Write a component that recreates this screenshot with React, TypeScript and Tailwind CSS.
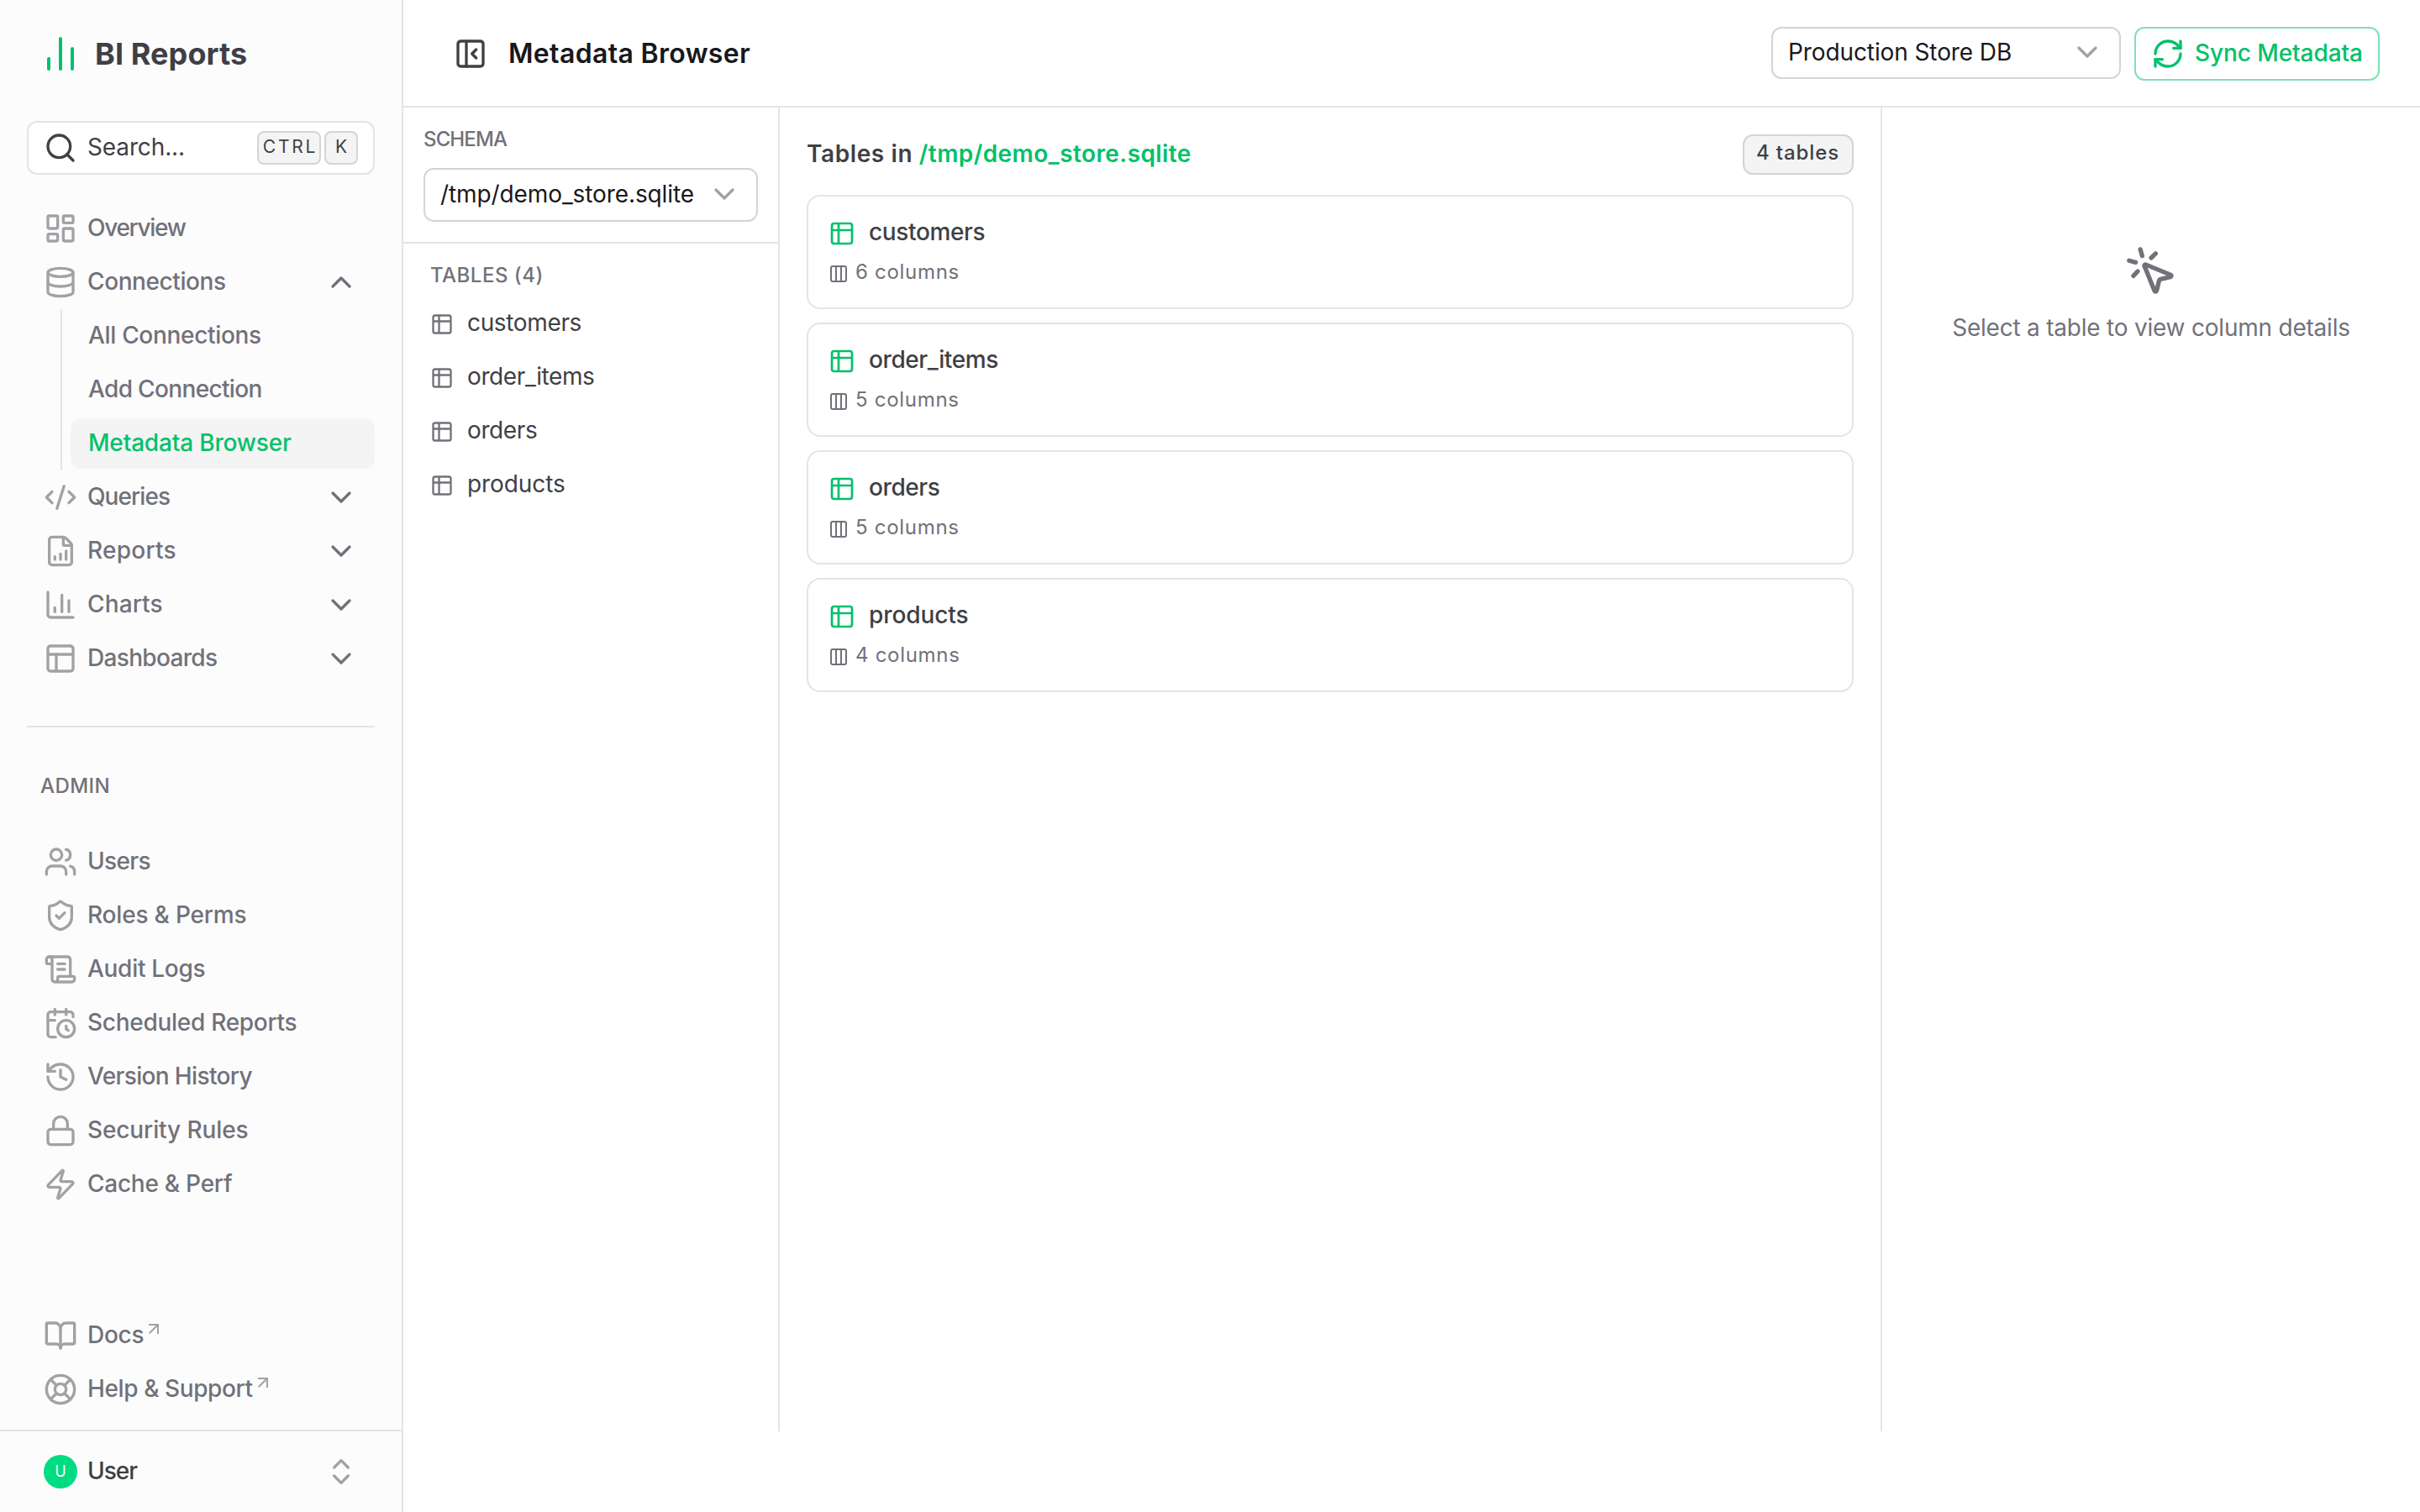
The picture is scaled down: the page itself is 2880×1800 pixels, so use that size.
import React from 'react'
import {
  BookOpen,
  CalendarClock,
  ChartColumn,
  ChartNoAxesColumn,
  ChevronDown,
  ChevronUp,
  ChevronsUpDown,
  CodeXml,
  Columns3,
  Database,
  FileChartColumnIncreasing,
  History,
  LayoutDashboard,
  LifeBuoy,
  Lock,
  MousePointerClick,
  PanelLeftClose,
  PanelsTopLeft,
  RefreshCw,
  ScrollText,
  Search,
  ShieldCheck,
  Users,
  Zap,
  type LucideIcon
} from 'lucide-react'

interface NavItem {
  label: string
  icon: LucideIcon
  tracking: string
  expandable?: boolean
  external?: boolean
}

interface TableInfo {
  name: string
  columns: number
  tracking: string
}

const CONNECTION_LINKS = [
  { label: 'All Connections', tracking: 'tracking-[-0.32px]', active: false },
  { label: 'Add Connection', tracking: 'tracking-[-0.65px]', active: false },
  { label: 'Metadata Browser', tracking: 'tracking-[-0.18px]', active: true }
]

const MAIN_NAV: NavItem[] = [
  { label: 'Queries', icon: CodeXml, tracking: 'tracking-[-0.92px]', expandable: true },
  { label: 'Reports', icon: FileChartColumnIncreasing, tracking: 'tracking-[0.25px]', expandable: true },
  { label: 'Charts', icon: ChartColumn, tracking: 'tracking-[0.13px]', expandable: true },
  { label: 'Dashboards', icon: PanelsTopLeft, tracking: 'tracking-[-0.67px]', expandable: true }
]

const ADMIN_NAV: NavItem[] = [
  { label: 'Users', icon: Users, tracking: 'tracking-[-0.65px]' },
  { label: 'Roles & Perms', icon: ShieldCheck, tracking: 'tracking-[-0.19px]' },
  { label: 'Audit Logs', icon: ScrollText, tracking: 'tracking-[-0.29px]' },
  { label: 'Scheduled Reports', icon: CalendarClock, tracking: 'tracking-[-0.28px]' },
  { label: 'Version History', icon: History, tracking: 'tracking-[-0.64px]' },
  { label: 'Security Rules', icon: Lock, tracking: 'tracking-[-0.11px]' },
  { label: 'Cache & Perf', icon: Zap, tracking: 'tracking-[-0.25px]' }
]

const FOOTER_NAV: NavItem[] = [
  { label: 'Docs', icon: BookOpen, tracking: 'tracking-[-0.26px]', external: true },
  { label: 'Help & Support', icon: LifeBuoy, tracking: 'tracking-[-0.4px]', external: true }
]

const TABLES: TableInfo[] = [
  { name: 'customers', columns: 6, tracking: 'tracking-[-0.35px]' },
  { name: 'order_items', columns: 5, tracking: 'tracking-[-0.4px]' },
  { name: 'orders', columns: 5, tracking: 'tracking-[-0.4px]' },
  { name: 'products', columns: 4, tracking: 'tracking-[-0.08px]' }
]

const SCHEMA = '/tmp/demo_store.sqlite'

export default function App() {
  return (
    <div className="flex h-[1800px] w-[2880px] overflow-hidden bg-white font-['Inter','Liberation_Sans',sans-serif] text-[28px] leading-10 text-[#3f3f46]">
      <Sidebar />
      <div className="flex min-w-0 flex-1 flex-col">
        <Header />
        <main className="flex h-[1576px]">
          <SchemaPanel />
          <TableList />
          <ColumnDetails />
        </main>
      </div>
    </div>
  )
}

function Sidebar() {
  return (
    <aside className="flex w-[480px] flex-shrink-0 flex-col border-r-2 border-[#e4e4e4] bg-[#fcfcfc]">
      <div className="flex h-32 items-center gap-[17px] pl-12">
        <ChartNoAxesColumn size={48} className="text-[#00c16a]" />
        <span className="text-[36px] font-bold tracking-[0.1px]">BI Reports</span>
      </div>

      <div className="flex flex-1 flex-col px-8 pt-4">
        {/* Search trigger */}
        <button className="flex h-16 items-center rounded-xl border-2 border-[#e4e4e4] bg-white pl-[18px] pr-[18px]">
          <Search size={40} className="flex-shrink-0" />
          <span className="ml-3 flex-1 pb-[2px] text-left tracking-[-0.13px]">Search...</span>
          <Kbd className="w-[76px] tracking-[2.8px] pl-[3px]">CTRL</Kbd>
          <Kbd className="ml-1 w-10">K</Kbd>
        </button>

        <nav className="mt-[34px] flex flex-col gap-1">
          <NavRow item={{ label: 'Overview', icon: LayoutDashboard, tracking: 'tracking-[-1.3px]' }} />
          <div>
            <NavRow item={{ label: 'Connections', icon: Database, tracking: 'tracking-[-0.41px]' }} open />
            <div className="my-[2px] ml-10 flex flex-col gap-1 border-l-2 border-[#e4e4e4] py-[2px] pl-[10px]">
              {CONNECTION_LINKS.map(link => (
                <a
                  key={link.label}
                  className={`flex h-[60px] items-center rounded-xl pb-[3px] pl-[21px] font-medium ${link.tracking} ${
                    link.active ? 'bg-[#f4f4f4] text-[#00c16a]' : 'text-[#71717a]'
                  }`}
                >
                  {link.label}
                </a>
              ))}
            </div>
            <div className="flex flex-col gap-1">
              {MAIN_NAV.map(item => <NavRow key={item.label} item={item} />)}
            </div>
          </div>
        </nav>

        <div className="mt-[50px] h-[2px] bg-[#e4e4e4]" />

        <div className="mt-[42px] flex h-[60px] items-center pb-[5px] pl-4 text-2xl font-medium tracking-[0.4px] text-[#71717a]">
          ADMIN
        </div>
        <nav className="mt-7 flex flex-col gap-1">
          {ADMIN_NAV.map(item => <NavRow key={item.label} item={item} />)}
        </nav>

        <nav className="mb-[18px] mt-auto flex flex-col gap-1">
          {FOOTER_NAV.map(item => <NavRow key={item.label} item={item} />)}
        </nav>
      </div>

      {/* Account menu */}
      <div className="flex h-[98px] items-center border-t-2 border-[#e4e4e4] pl-[52px] pr-[52px]">
        <span className="flex h-10 w-10 items-center justify-center rounded-full bg-[#00dc82] text-lg text-white">U</span>
        <span className="ml-3 flex-1 pb-[3px] font-medium tracking-[-1px]">User</span>
        <ChevronsUpDown size={40} className="text-[#a1a1a6]" />
      </div>
    </aside>
  )
}

function NavRow({ item, open }: { item: NavItem; open?: boolean }) {
  const Icon = item.icon
  return (
    <a className="flex h-[60px] items-center pl-5 pr-5 text-[#71717a]">
      <Icon size={40} className="mr-3 flex-shrink-0 text-[#a1a1a6]" />
      <span className={`pb-[3px] font-medium ${item.tracking}`}>{item.label}</span>
      {item.external && (
        <svg width="12" height="12" viewBox="0 0 12 12" fill="none" stroke="currentColor" strokeWidth="2" className="mb-4 ml-1.5 text-[#a1a1a6]">
          <path d="M0 1h11v11M11 1L.7 11.3" />
        </svg>
      )}
      {open && <ChevronUp size={40} className="ml-auto" />}
      {item.expandable && <ChevronDown size={40} className="ml-auto" />}
    </a>
  )
}

function Kbd({ className, children }: { className: string; children: React.ReactNode }) {
  return (
    <kbd className={`flex h-10 items-center justify-center rounded-lg border-2 border-[#d4d4d4] bg-[#f4f4f4] pb-[3px] font-['Inter',sans-serif] text-[21px] ${className}`}>
      {children}
    </kbd>
  )
}

function Header() {
  return (
    <header className="flex h-32 flex-shrink-0 items-start border-b-2 border-[#e4e4e4] pl-[60px] pr-12 pt-8">
      <div className="flex h-16 items-center">
        <PanelLeftClose size={40} />
        <h1 className="ml-[25px] text-[32px] font-semibold tracking-[0.34px] text-[#18181b]">Metadata Browser</h1>
      </div>
      <div className="ml-auto flex gap-4">
        <Select className="h-[62px] w-[416px]">Production Store DB</Select>
        <button className="flex h-16 w-[292px] items-center rounded-xl border-2 border-[#00c16a]/50 pl-[18px] text-[#00c16a]">
          <RefreshCw size={40} />
          <span className="ml-3 pb-[3px] font-medium tracking-[-0.09px]">Sync Metadata</span>
        </button>
      </div>
    </header>
  )
}

function Select({ className, children }: { className: string; children: React.ReactNode }) {
  return (
    <button className={`flex items-center justify-between rounded-xl border-2 border-[#d4d4d4] bg-white pb-[2px] pl-[18px] pr-[18px] text-[#18181b] ${className}`}>
      <span className="whitespace-nowrap tracking-[-0.1px]">{children}</span>
      <ChevronDown size={40} className="flex-shrink-0 text-[#a1a1a6]" />
    </button>
  )
}

function SchemaPanel() {
  return (
    <section className="w-[448px] flex-shrink-0 border-r-2 border-[#e4e4e4]">
      <div className="border-b-2 border-[#e4e4e4] p-6">
        <div className="mb-[21px] h-[27px] pt-px text-2xl leading-[26px] font-medium tracking-[-0.87px] text-[#71717a]">SCHEMA</div>
        <Select className="h-16 w-full">{SCHEMA}</Select>
      </div>
      <div className="px-4 pt-4">
        <div className="flex h-12 items-center pb-[5px] pl-4 text-2xl font-medium tracking-[0.5px] text-[#71717a]">
          TABLES ({TABLES.length})
        </div>
        {TABLES.map(table => (
          <div key={table.name} className="flex h-16 items-center pl-4">
            <TableIcon size={28} className="text-[#71717a]" />
            <span className={`ml-4 pb-1 ${table.tracking}`}>{table.name}</span>
          </div>
        ))}
      </div>
    </section>
  )
}

/* Table outline with a header row and a key column */
function TableIcon({ size, className }: { size: number; className: string }) {
  return (
    <svg
      width={size}
      height={size}
      viewBox="0 0 24 24"
      fill="none"
      stroke="currentColor"
      strokeWidth="2"
      strokeLinecap="round"
      strokeLinejoin="round"
      className={className}
    >
      <path d="M9 3H5a2 2 0 0 0-2 2v4m6-6h10a2 2 0 0 1 2 2v4M9 3v18m0 0h10a2 2 0 0 0 2-2V9M9 21H5a2 2 0 0 1-2-2V9m0 0h18" />
    </svg>
  )
}

function TableList() {
  return (
    <section className="w-[1312px] flex-shrink-0 border-r-2 border-[#e4e4e4] p-8">
      <div className="mb-6 flex h-12 items-center justify-between">
        <h2 className="pb-[3px] font-semibold">
          <span className="tracking-[0.6px]">Tables in </span>
          <span className="tracking-[0.41px] text-[#00c16a]">{SCHEMA}</span>
        </h2>
        <span className="flex h-12 w-[132px] items-center justify-center rounded-xl border-2 border-[#d4d4d4] bg-[#f4f4f4] pb-1 pr-px text-2xl font-medium tracking-[0.9px]">
          {TABLES.length} tables
        </span>
      </div>
      <div className="flex flex-col gap-4">
        {TABLES.map(table => (
          <div key={table.name} className="h-[136px] rounded-2xl border-2 border-[#e4e4e4] px-6 pt-5">
            <div className="flex h-12 items-center">
              <TableIcon size={32} className="text-[#00c16a]" />
              <span className={`ml-4 pb-1 font-medium ${table.tracking}`}>{table.name}</span>
            </div>
            <div className="mt-2 flex h-8 items-center text-[#71717a]">
              <Columns3 size={24} />
              <span className="ml-2 pb-1 text-2xl tracking-[0.7px]">{table.columns} columns</span>
            </div>
          </div>
        ))}
      </div>
    </section>
  )
}

function ColumnDetails() {
  return (
    <section className="flex flex-1 flex-col items-center pt-[163px] text-[#71717a]">
      <MousePointerClick size={64} />
      <p className="mt-[15px] tracking-[-0.22px]">Select a table to view column details</p>
    </section>
  )
}
